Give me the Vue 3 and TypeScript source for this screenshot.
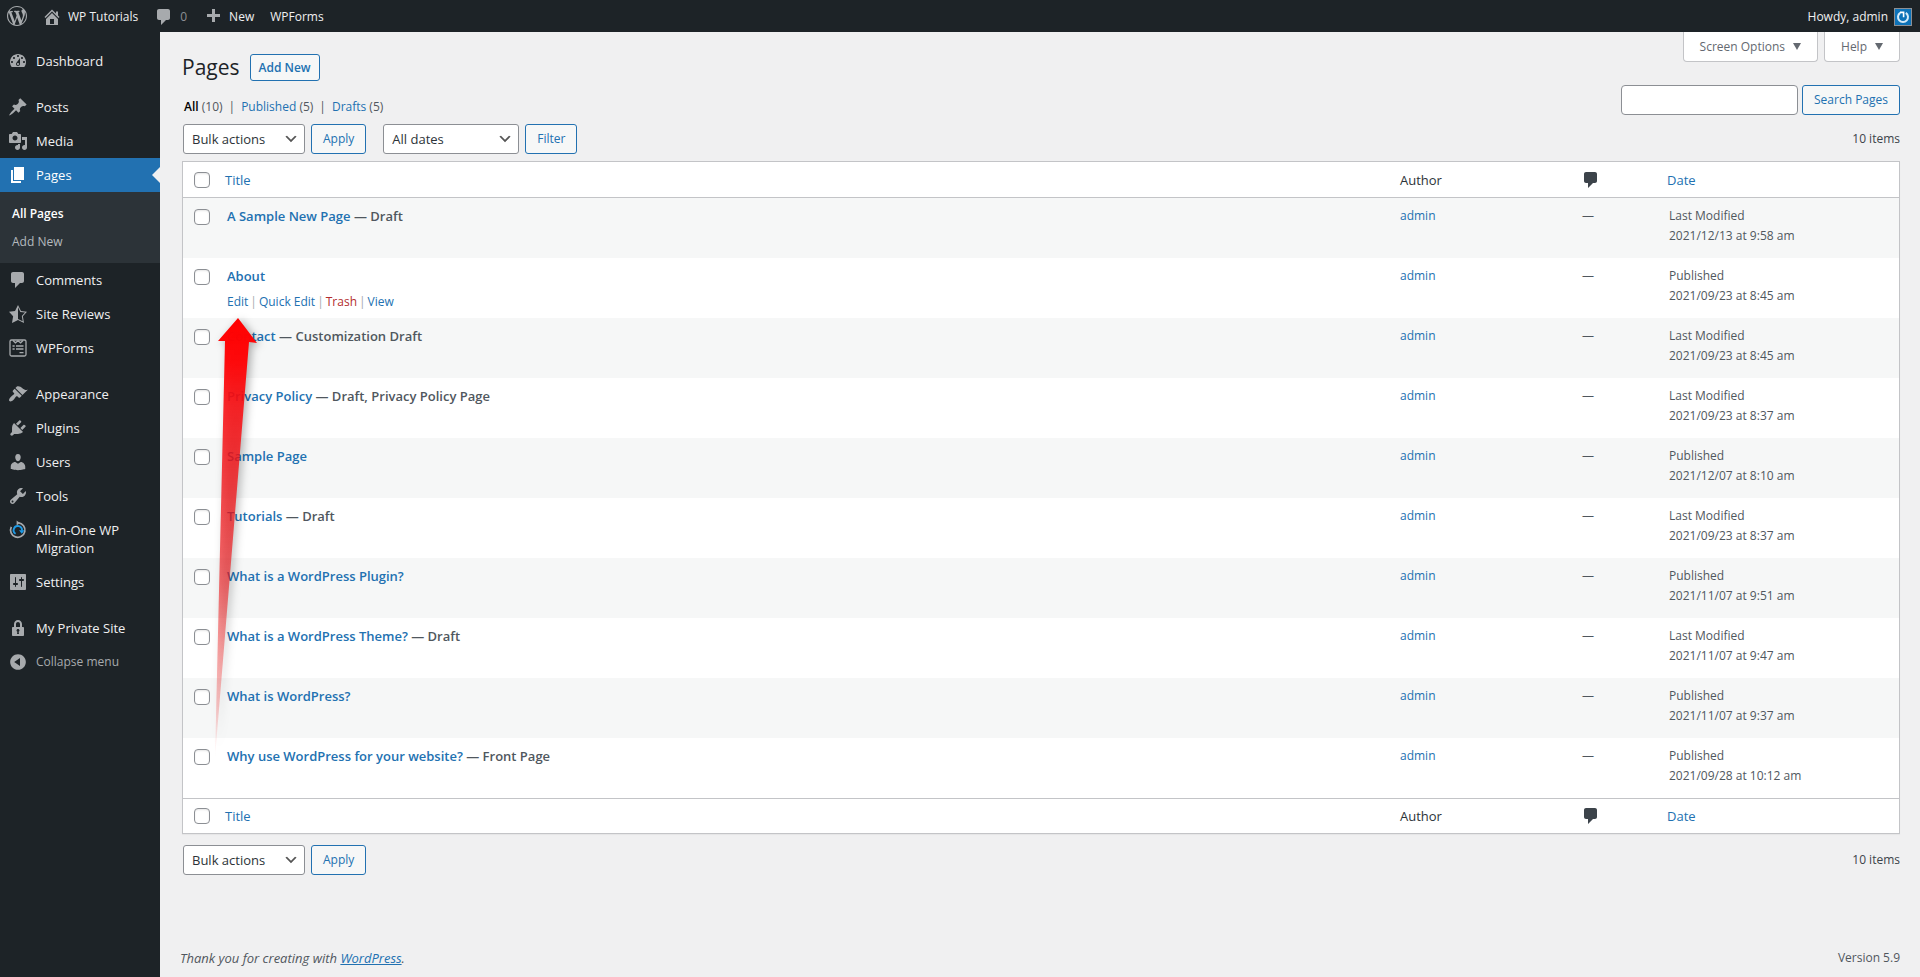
<script setup lang="ts">
import { ref } from 'vue'

interface MenuItem {
  label: string
  icon: string
  current?: boolean
  gapAfter?: boolean
}

interface PageRow {
  id: number
  title: string
  state?: string
  status: 'Published' | 'Last Modified'
  date: string
  actions?: boolean
}

const icons: Record<string, string> = {
  wordpress:
    'M20 10c0-5.51-4.49-10-10-10C4.48 0 0 4.49 0 10c0 5.52 4.48 10 10 10 5.51 0 10-4.48 10-10zM7.78 15.37L4.37 6.22c.55-.02 1.17-.08 1.17-.08.5-.06.44-1.13-.06-1.11 0 0-1.45.11-2.37.11-.18 0-.37 0-.58-.01C4.12 2.69 6.87 1.11 10 1.11c2.33 0 4.45.87 6.05 2.34-.68-.11-1.65.39-1.65 1.58 0 .74.45 1.36.9 2.1.35.61.55 1.36.55 2.46 0 1.49-1.4 5-1.4 5l-3.03-8.37c.54-.02.82-.17.82-.17.5-.05.44-1.25-.06-1.22 0 0-1.44.12-2.38.12-.87 0-2.33-.12-2.33-.12-.5-.03-.56 1.2-.06 1.22l.92.08 1.26 3.41zM17.41 10c.24-.64.74-1.87.43-4.25.7 1.29 1.05 2.71 1.05 4.25 0 3.29-1.73 6.24-4.4 7.78.97-2.59 1.94-5.2 2.92-7.78zM6.1 18.09C3.12 16.65 1.11 13.53 1.11 10c0-1.3.23-2.48.72-3.59C3.25 10.3 4.67 14.2 6.1 18.09zm4.03-6.63l2.58 6.98c-.86.29-1.76.45-2.71.45-.79 0-1.57-.11-2.29-.33.81-2.38 1.62-4.74 2.42-7.1z',
  home: 'M16 8.5l1.53 1.53-1.06 1.06L10 4.6l-6.47 6.49-1.06-1.06L10 2.5l4 4v-2h2v4zm-6-2.46l6 5.99V18H4v-5.97zM12 17v-5H8v5h4z',
  comment: 'M5 2h9c1.1 0 2 .9 2 2v7c0 1.1-.9 2-2 2h-2l-5 5v-5H5c-1.1 0-2-.9-2-2V4c0-1.1.9-2 2-2z',
  plus: 'M17 7v3h-5v5H9v-5H4V7h5V2h3v5h5z',
  dashboard:
    'M3.76 16h12.48c1.1-1.37 1.76-3.11 1.76-5 0-4.42-3.58-8-8-8s-8 3.58-8 8c0 1.89.66 3.63 1.76 5zM10 4c.55 0 1 .45 1 1s-.45 1-1 1-1-.45-1-1 .45-1 1-1zM6 6c.55 0 1 .45 1 1s-.45 1-1 1-1-.45-1-1 .45-1 1-1zm8 0c.55 0 1 .45 1 1s-.45 1-1 1-1-.45-1-1 .45-1 1-1zm-5.37 5.55L12 7v6c0 1.1-.9 2-2 2s-2-.9-2-2c0-.57.24-1.08.63-1.45zM4 10c.55 0 1 .45 1 1s-.45 1-1 1-1-.45-1-1 .45-1 1-1zm12 0c.55 0 1 .45 1 1s-.45 1-1 1-1-.45-1-1 .45-1 1-1zm-5 3c0-.55-.45-1-1-1s-1 .45-1 1 .45 1 1 1 1-.45 1-1z',
  post: 'M10.44 3.02l1.82-1.82 6.36 6.35-1.83 1.82c-1.05-.68-2.48-.57-3.41.36l-.75.75c-.92.93-1.04 2.35-.35 3.41l-1.83 1.82-2.41-2.41-2.8 2.79c-.42.42-3.38 2.71-3.8 2.29s1.86-3.39 2.28-3.81l2.79-2.79L4.1 9.36l1.83-1.82c1.05.69 2.48.57 3.4-.36l.75-.75c.93-.92 1.05-2.35.36-3.41z',
  media:
    'M13 11V4c0-.55-.45-1-1-1h-1.67L9 1H5L3.67 3H2c-.55 0-1 .45-1 1v7c0 .55.45 1 1 1h10c.55 0 1-.45 1-1zM7 4.5c1.38 0 2.5 1.12 2.5 2.5S8.38 9.5 7 9.5 4.5 8.38 4.5 7 5.62 4.5 7 4.5zM14 6h5v10.5c0 1.38-1.12 2.5-2.5 2.5S14 17.88 14 16.5s1.12-2.5 2.5-2.5c.17 0 .34.02.5.05V9h-3V6zm-4 8.05V13h2v3.5c0 1.38-1.12 2.5-2.5 2.5S7 17.88 7 16.5 8.12 14 9.5 14c.17 0 .34.02.5.05z',
  page: 'M6 15V2h10v13H6zm-1 1h8v2H3V5h2v11z',
  star: 'M10 1L7 7l-6 .75 4.13 4.62L4 19l6-3 6 3-1.12-6.63L19 7.75 13 7zm0 2.24l2.34 4.69 4.65.58-3.18 3.56.87 5.15L10 14.88V3.24z',
  appearance:
    'M14.48 11.06L7.41 3.99l1.5-1.5c.5-.56 2.3-.47 3.51.32 1.21.8 1.43 1.28 2.91 2.1 1.18.64 2.45 1.26 4.45.85zm-.71.71L6.7 4.7 4.93 6.47c-.39.39-.39 1.02 0 1.41l1.06 1.06c.39.39.39 1.03 0 1.42-.6.6-1.43 1.11-2.21 1.69-.35.26-.7.53-1.01.84C1.43 14.23.4 16.08 1.4 17.07c.99 1 2.84-.03 4.18-1.36.31-.31.58-.66.85-1.02.57-.78 1.08-1.61 1.69-2.21.39-.39 1.02-.39 1.41 0l1.06 1.06c.39.39 1.02.39 1.41 0z',
  plugins:
    'M13.11 4.36L9.87 7.6 8 5.73l3.24-3.24c.35-.34 1.05-.2 1.56.32.52.51.66 1.21.31 1.55zm-8 1.77l.91-1.12 9.01 9.01-1.19.84c-.71.71-2.63 1.16-3.82 1.16H6.14L4.9 17.26c-.59.59-1.54.59-2.12 0-.59-.58-.59-1.53 0-2.12l1.24-1.24v-3.88c0-1.13.4-3.19 1.09-3.89zm7.26 3.97l3.24-3.24c.34-.35 1.04-.21 1.55.31.52.51.66 1.21.31 1.55l-3.24 3.25z',
  users:
    'M10 9.25c-2.27 0-2.73-3.44-2.73-3.44C7 4.02 7.82 2 9.97 2c2.16 0 2.98 2.02 2.71 3.81 0 0-.41 3.44-2.68 3.44zm0 2.57L12.72 10c2.39 0 4.52 2.33 4.52 4.53v2.49s-3.65 1.13-7.24 1.13c-3.65 0-7.24-1.13-7.24-1.13v-2.49c0-2.25 1.94-4.48 4.47-4.48z',
  tools:
    'M16.68 9.77c-1.34 1.34-3.3 1.67-4.95.99l-5.41 6.52c-.99.99-2.59.99-3.58 0s-.99-2.59 0-3.57l6.52-5.42c-.68-1.65-.35-3.61.99-4.95 1.28-1.28 3.12-1.62 4.72-1.06l-2.89 2.89 2.82 2.82 2.86-2.87c.53 1.58.18 3.39-1.08 4.65zM3.81 16.21c.4.39 1.04.39 1.43 0 .4-.4.4-1.04 0-1.43-.39-.4-1.03-.4-1.43 0-.39.39-.39 1.03 0 1.43z',
  settings:
    'M18 17V3c0-.55-.45-1-1-1H3c-.55 0-1 .45-1 1v14c0 .55.45 1 1 1h14c.55 0 1-.45 1-1zM8 11h1c.55 0 1 .45 1 1s-.45 1-1 1H8v1.5c0 .28-.22.5-.5.5s-.5-.22-.5-.5V13H6c-.55 0-1-.45-1-1s.45-1 1-1h1V5.5c0-.28.22-.5.5-.5s.5.22.5.5V11zm5-2h-1c-.55 0-1-.45-1-1s.45-1 1-1h1V5.5c0-.28.22-.5.5-.5s.5.22.5.5V7h1c.55 0 1 .45 1 1s-.45 1-1 1h-1v5.5c0 .28-.22.5-.5.5s-.5-.22-.5-.5V9z',
  lock: 'M14 9h1c.55 0 1 .45 1 1v7c0 .55-.45 1-1 1H5c-.55 0-1-.45-1-1v-7c0-.55.45-1 1-1h1V6c0-2.21 1.79-4 4-4s4 1.79 4 4v3zm-2 0V6c0-1.1-.9-2-2-2s-2 .9-2 2v3h4zm-1 7l-.36-2.15c.51-.24.86-.75.86-1.35 0-.83-.67-1.5-1.5-1.5s-1.5.67-1.5 1.5c0 .6.35 1.11.86 1.35L9 16h2z',
  collapse:
    'M10 2.16c4.33 0 7.84 3.51 7.84 7.84s-3.51 7.84-7.84 7.84S2.16 14.33 2.16 10 5.71 2.16 10 2.16zm2 11.72V6.12L6.18 9.97z',
}

const menu: MenuItem[] = [
  { label: 'Dashboard', icon: 'dashboard', gapAfter: true },
  { label: 'Posts', icon: 'post' },
  { label: 'Media', icon: 'media' },
  { label: 'Pages', icon: 'page', current: true },
  { label: 'Comments', icon: 'comment' },
  { label: 'Site Reviews', icon: 'star' },
  { label: 'WPForms', icon: 'wpforms', gapAfter: true },
  { label: 'Appearance', icon: 'appearance' },
  { label: 'Plugins', icon: 'plugins' },
  { label: 'Users', icon: 'users' },
  { label: 'Tools', icon: 'tools' },
  { label: 'All-in-One WP Migration', icon: 'migration' },
  { label: 'Settings', icon: 'settings', gapAfter: true },
  { label: 'My Private Site', icon: 'lock' },
]

const rows: PageRow[] = [
  { id: 1, title: 'A Sample New Page', state: 'Draft', status: 'Last Modified', date: '2021/12/13 at 9:58 am' },
  { id: 2, title: 'About', status: 'Published', date: '2021/09/23 at 8:45 am', actions: true },
  { id: 3, title: 'Contact', state: 'Customization Draft', status: 'Last Modified', date: '2021/09/23 at 8:45 am' },
  { id: 4, title: 'Privacy Policy', state: 'Draft, Privacy Policy Page', status: 'Last Modified', date: '2021/09/23 at 8:37 am' },
  { id: 5, title: 'Sample Page', status: 'Published', date: '2021/12/07 at 8:10 am' },
  { id: 6, title: 'Tutorials', state: 'Draft', status: 'Last Modified', date: '2021/09/23 at 8:37 am' },
  { id: 7, title: 'What is a WordPress Plugin?', status: 'Published', date: '2021/11/07 at 9:51 am' },
  { id: 8, title: 'What is a WordPress Theme?', state: 'Draft', status: 'Last Modified', date: '2021/11/07 at 9:47 am' },
  { id: 9, title: 'What is WordPress?', status: 'Published', date: '2021/11/07 at 9:37 am' },
  { id: 10, title: 'Why use WordPress for your website?', state: 'Front Page', status: 'Published', date: '2021/09/28 at 10:12 am' },
]

const selected = ref<number[]>([])
const search = ref('')

function toggleAll(event: Event) {
  const checked = (event.target as HTMLInputElement).checked
  selected.value = checked ? rows.map((row) => row.id) : []
}
</script>

<template>
  <div class="admin">
    <header class="toolbar">
      <nav class="toolbar-group" aria-label="Toolbar">
        <a href="#" class="tool logo" aria-label="About WordPress">
          <svg class="icon" viewBox="0 0 20 20"><path :d="icons.wordpress" /></svg>
        </a>
        <a href="#" class="tool site">
          <svg class="icon" viewBox="0 0 20 20"><path :d="icons.home" /></svg>WP Tutorials
        </a>
        <a href="#" class="tool comments">
          <svg class="icon" viewBox="0 0 20 20"><path :d="icons.comment" /></svg><span class="count">0</span>
        </a>
        <a href="#" class="tool new">
          <svg class="icon" viewBox="0 0 20 20"><path :d="icons.plus" /></svg>New
        </a>
        <a href="#" class="tool">WPForms</a>
      </nav>
      <a href="#" class="tool account">
        Howdy, admin
        <svg class="avatar" viewBox="0 0 18 18">
          <rect x=".5" y=".5" width="17" height="17" fill="#0d72b8" stroke="#8c8f94" />
          <path d="M6.2 4.9a5 5 0 1 0 5.6 0" fill="none" stroke="#d5eaf8" stroke-width="2" />
          <path d="M6 4.4h3.6v4.8" fill="none" stroke="#fff" stroke-width="1.6" />
        </svg>
      </a>
    </header>

    <div class="body">
      <nav class="sidebar" aria-label="Main menu">
        <template v-for="item in menu" :key="item.label">
          <a href="#" class="menu-item" :class="{ current: item.current, 'gap-after': item.gapAfter }">
            <svg v-if="item.icon === 'wpforms'" class="icon" viewBox="0 0 20 20">
              <rect x="2" y="2" width="16" height="16" rx="1.5" fill="none" stroke="currentColor" stroke-width="1.3" />
              <path d="M5 2.5l2.4 2.3L10 2.8l2.6 2L15 2.5M4.5 8h2.2M8 8h7.5M4.5 11h2.2M8 11h7.5M11.5 14.6h4" fill="none" stroke="currentColor" stroke-width="1.3" />
            </svg>
            <svg v-else-if="item.icon === 'migration'" class="icon" viewBox="0 0 20 20">
              <path d="M3.3 6.9A7.2 7.2 0 1 0 10.4 2.9" fill="none" stroke="currentColor" stroke-width="1.7" />
              <path d="M8.6 .6v5l3.4-2.6z" />
              <path d="M7.6 13.8A4.2 4.2 0 1 1 14 10.6" fill="none" stroke="#1f9be6" stroke-width="1.9" />
              <path d="M11 10.2h5.6l-2.8 3.6z" fill="#1f9be6" />
            </svg>
            <svg v-else class="icon" viewBox="0 0 20 20"><path :d="icons[item.icon]" /></svg>
            <span class="menu-label">{{ item.label }}</span>
          </a>
          <div v-if="item.current" class="submenu">
            <a href="#" class="active">All Pages</a>
            <a href="#">Add New</a>
          </div>
        </template>
        <button type="button" class="menu-item collapse">
          <svg class="icon" viewBox="0 0 20 20"><path :d="icons.collapse" /></svg>
          <span class="menu-label">Collapse menu</span>
        </button>
      </nav>

      <div class="content">
        <main class="wrap">
          <div class="page-head">
            <div class="head-left">
              <div class="heading">
                <h1>Pages</h1>
                <a href="#" class="add-new">Add New</a>
              </div>
              <ul class="views">
                <li><a href="#" class="active">All</a> (10)</li>
                <li><a href="#">Published</a> (5)</li>
                <li><a href="#">Drafts</a> (5)</li>
              </ul>
            </div>
            <div class="head-right">
              <div class="screen-tabs">
                <button type="button">Screen Options<svg class="caret" viewBox="0 0 8 7"><path d="M0 0h8L4 7z" /></svg></button>
                <button type="button">Help<svg class="caret" viewBox="0 0 8 7"><path d="M0 0h8L4 7z" /></svg></button>
              </div>
              <form class="search" role="search" @submit.prevent>
                <input v-model="search" type="search" aria-label="Search Pages" />
                <button type="submit" class="button">Search Pages</button>
              </form>
            </div>
          </div>

          <div class="tablenav">
            <select class="bulk" aria-label="Select bulk action"><option>Bulk actions</option></select>
            <button type="button" class="button">Apply</button>
            <select class="dates" aria-label="Filter by date"><option>All dates</option></select>
            <button type="button" class="button">Filter</button>
            <span class="total">10 items</span>
          </div>

          <div class="list">
            <table>
              <colgroup>
                <col class="col-check" /><col /><col class="col-author" /><col class="col-comments" /><col class="col-date" />
              </colgroup>
              <thead>
                <tr>
                  <td class="check"><input type="checkbox" aria-label="Select All" @change="toggleAll" /></td>
                  <th scope="col"><a href="#">Title</a></th>
                  <th scope="col" class="author">Author</th>
                  <th scope="col"><a href="#" class="bubble" aria-label="Comments"><svg class="icon" viewBox="0 0 20 20"><path :d="icons.comment" /></svg></a></th>
                  <th scope="col"><a href="#">Date</a></th>
                </tr>
              </thead>
              <tbody>
                <tr v-for="row in rows" :key="row.id">
                  <td class="check"><input v-model="selected" type="checkbox" :value="row.id" :aria-label="`Select ${row.title}`" /></td>
                  <td class="title">
                    <strong><a href="#">{{ row.title }}</a><template v-if="row.state"> — {{ row.state }}</template></strong>
                    <div v-if="row.actions" class="row-actions">
                      <a href="#">Edit</a>|<a href="#">Quick Edit</a>|<a href="#" class="trash">Trash</a>|<a href="#">View</a>
                    </div>
                  </td>
                  <td><a href="#">admin</a></td>
                  <td class="dash">—</td>
                  <td>{{ row.status }}<br />{{ row.date }}</td>
                </tr>
              </tbody>
              <tfoot>
                <tr>
                  <td class="check"><input type="checkbox" aria-label="Select All" @change="toggleAll" /></td>
                  <th scope="col"><a href="#">Title</a></th>
                  <th scope="col" class="author">Author</th>
                  <th scope="col"><a href="#" class="bubble" aria-label="Comments"><svg class="icon" viewBox="0 0 20 20"><path :d="icons.comment" /></svg></a></th>
                  <th scope="col"><a href="#">Date</a></th>
                </tr>
              </tfoot>
            </table>

            <!-- Callout pointing at the Edit action -->
            <svg class="callout" viewBox="0 0 64 460" aria-hidden="true">
              <defs>
                <linearGradient id="callout-fill" x1="0" y1="0" x2="0" y2="1">
                  <stop offset="0" stop-color="#ff0000" />
                  <stop offset=".1" stop-color="#ff0406" stop-opacity=".97" />
                  <stop offset=".2" stop-color="#fa0e12" stop-opacity=".89" />
                  <stop offset=".4" stop-color="#f21418" stop-opacity=".77" />
                  <stop offset=".6" stop-color="#ec181c" stop-opacity=".63" />
                  <stop offset=".75" stop-color="#f02828" stop-opacity=".44" />
                  <stop offset=".88" stop-color="#f03030" stop-opacity=".28" />
                  <stop offset="1" stop-color="#f03030" stop-opacity="0" />
                </linearGradient>
              </defs>
              <path d="M28 8L47 33L39 32L5 448L15 31L8 31z" fill="url(#callout-fill)" />
            </svg>
          </div>

          <div class="tablenav bottom">
            <select class="bulk" aria-label="Select bulk action"><option>Bulk actions</option></select>
            <button type="button" class="button">Apply</button>
            <span class="total">10 items</span>
          </div>
        </main>

        <footer class="footer">
          <em>Thank you for creating with <a href="#">WordPress</a>.</em>
          <span>Version 5.9</span>
        </footer>
      </div>
    </div>
  </div>
</template>

<style>
body {
  margin: 0;
  background: #f0f0f1;
}
</style>

<style scoped>
.admin {
  display: flex;
  flex-direction: column;
  min-height: 100vh;
  font-family: "Open Sans", "Noto Sans", sans-serif;
  font-size: 12px;
  line-height: 20px;
  color: #3c434a;
}

.admin *,
.admin {
  box-sizing: border-box;
}

a {
  color: #2271b1;
  text-decoration: none;
}

button,
input,
select {
  font-family: inherit;
  margin: 0;
}

.icon {
  display: block;
  width: 20px;
  height: 20px;
  flex: none;
  fill: currentColor;
}

/* Toolbar */
.toolbar {
  display: flex;
  justify-content: space-between;
  height: 32px;
  background: #1d2327;
}

.toolbar-group {
  display: flex;
}

.tool {
  display: flex;
  align-items: center;
  padding: 1px 8px 0;
  color: #f0f0f1;
}

.tool .icon {
  margin-right: 6px;
  color: #a7aaad;
}

.tool.logo {
  padding: 0 7px;
}

.tool.logo .icon {
  margin-right: 0;
}

.count {
  color: #8c8f94;
}

.avatar {
  width: 18px;
  height: 18px;
  margin-left: 6px;
}

/* Sidebar */
.body {
  display: flex;
  flex: 1;
}

.sidebar {
  display: flex;
  flex-direction: column;
  flex: none;
  width: 160px;
  padding-top: 12px;
  background: #1d2327;
}

.menu-item {
  position: relative;
  display: flex;
  padding: 0 8px;
  border: 0;
  background: none;
  font-size: 13px;
  line-height: 18px;
  color: #f0f0f1;
  text-align: left;
}

.menu-item .icon {
  margin-top: 7px;
  color: #a7aaad;
}

.menu-label {
  padding: 8px 0 8px 8px;
}

.gap-after {
  margin-bottom: 12px;
}

.current {
  background: #2271b1;
  color: #fff;
}

.current .icon {
  color: #fff;
}

.current::after {
  content: "";
  position: absolute;
  right: 0;
  top: 9px;
  border: 8px solid transparent;
  border-left-width: 0;
  border-right-color: #f0f0f1;
}

.submenu {
  display: flex;
  flex-direction: column;
  padding: 8px 12px 7px;
  background: #2c3338;
}

.submenu a {
  line-height: 28px;
  color: #b4b9be;
}

.submenu .active {
  font-weight: 600;
  color: #fff;
}

.collapse,
.collapse .icon {
  color: #a7aaad;
}

.collapse {
  font-size: 12px;
}

/* Content */
.content {
  display: flex;
  flex-direction: column;
  justify-content: space-between;
  flex: 1;
  min-width: 0;
  padding: 0 20px;
}

.wrap {
  padding-left: 2px;
}

.page-head {
  display: flex;
  justify-content: space-between;
}

.head-left {
  padding-top: 19px;
}

.heading {
  display: flex;
  align-items: center;
  gap: 10px;
  height: 32px;
}

h1 {
  margin: 0;
  font-size: 21px;
  font-weight: 400;
  line-height: 32px;
  color: #1d2327;
}

.add-new {
  height: 27px;
  padding: 0 8px;
  border: 1px solid #2271b1;
  border-radius: 3px;
  background: #f6f7f7;
  line-height: 26px;
  font-weight: 600;
}

.views {
  display: flex;
  margin: 14px 0 0;
  padding: 0 0 0 2px;
  list-style: none;
  color: #50575e;
}

.views li + li::before {
  content: "|";
  margin: 0 6px;
}

.views .active {
  font-weight: 600;
  color: #000;
}

.head-right {
  display: flex;
  flex-direction: column;
  align-items: flex-end;
  gap: 23px;
}

.screen-tabs {
  display: flex;
  gap: 6px;
}

.screen-tabs button {
  display: flex;
  align-items: center;
  gap: 8px;
  height: 30px;
  padding: 0 16px;
  border: 1px solid #c3c4c7;
  border-top: 0;
  border-radius: 0 0 4px 4px;
  background: #fff;
  font-size: 12px;
  color: #646970;
}

.caret {
  width: 8px;
  height: 7px;
  fill: #646970;
}

.search {
  display: flex;
  gap: 4px;
}

.search input {
  width: 177px;
  height: 30px;
  padding: 0 8px;
  border: 1px solid #8c8f94;
  border-radius: 4px;
  background: #fff;
  font-size: 13px;
}

.button {
  height: 30px;
  padding: 0 11px;
  border: 1px solid #2271b1;
  border-radius: 3px;
  background: #f6f7f7;
  font-size: 12px;
  line-height: 28px;
  color: #2271b1;
}

.tablenav {
  display: flex;
  gap: 6px;
  padding: 7px 0 7px 1px;
}

.tablenav select {
  appearance: none;
  height: 30px;
  padding: 0 24px 0 8px;
  border: 1px solid #8c8f94;
  border-radius: 3px;
  background: #fff url("data:image/svg+xml,%3Csvg xmlns='http://www.w3.org/2000/svg' viewBox='0 0 20 20'%3E%3Cpath d='M5 6l5 5 5-5 2 1-7 7-7-7 2-1z' fill='%23555'/%3E%3C/svg%3E") no-repeat right 5px center / 16px 16px;
  font-size: 13px;
  color: #2c3338;
}

.bulk {
  width: 122px;
}

.dates {
  width: 136px;
  margin-left: 11px;
}

.total {
  margin-left: auto;
  line-height: 30px;
}

.bottom {
  padding-top: 11px;
}

/* Pages table */
.list {
  position: relative;
}

table {
  width: 100%;
  table-layout: fixed;
  border: 1px solid #c3c4c7;
  border-spacing: 0;
  background: #fff;
  box-shadow: 0 1px 1px rgba(0, 0, 0, 0.04);
}

.col-check {
  width: 34px;
}

.col-author {
  width: 184px;
}

.col-comments {
  width: 85px;
}

.col-date {
  width: 240px;
}

thead th,
thead td,
tfoot th,
tfoot td {
  height: 36px;
  padding: 0 8px;
  font-size: 13px;
  font-weight: 400;
  text-align: left;
  color: #2c3338;
}

thead th,
thead td {
  border-bottom: 1px solid #c3c4c7;
}

tfoot th,
tfoot td {
  height: 35px;
  border-top: 1px solid #c3c4c7;
}

thead .author,
tfoot .author {
  padding-left: 10px;
}

.bubble {
  display: block;
  width: 20px;
  margin-left: -1px;
  color: #3c434a;
}

tbody td {
  height: 60px;
  padding: 8px 10px 0;
  vertical-align: top;
  color: #50575e;
}

tbody .dash {
  padding-left: 8px;
}

tbody tr:nth-child(odd) {
  background: #f6f7f7;
}

.title strong {
  display: block;
  font-size: 13px;
  font-weight: 600;
}

.row-actions {
  display: flex;
  gap: 2px;
  margin-top: 6px;
  color: #a7aaad;
}

.row-actions .trash {
  color: #b32d2e;
}

.check,
tbody .check {
  padding: 0 0 0 11px;
}

tbody .check {
  padding-top: 11px;
}

.check input {
  appearance: none;
  display: block;
  width: 16px;
  height: 16px;
  border: 1px solid #8c8f94;
  border-radius: 4px;
  background: #fff;
  box-shadow: inset 0 1px 2px rgba(0, 0, 0, 0.1);
}

.check input:checked {
  background: #2271b1;
}

.callout {
  position: absolute;
  left: 28px;
  top: 149px;
  width: 64px;
  height: 460px;
  overflow: visible;
  pointer-events: none;
  filter: drop-shadow(3px 2px 4px rgba(0, 0, 0, 0.32));
}

.footer {
  display: flex;
  justify-content: space-between;
  padding: 10px 0 9px;
  color: #50575e;
}

.footer em {
  font-size: 13px;
}

.footer a {
  text-decoration: underline;
}
</style>
